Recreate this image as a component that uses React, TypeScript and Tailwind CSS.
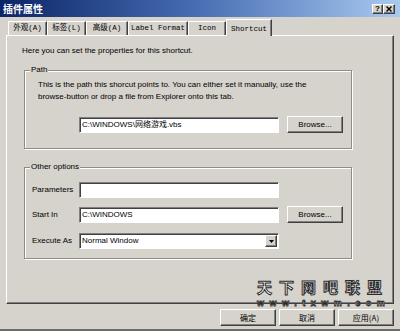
import React from "react";

const tabs = [
  { label: "外观(A)", w: "w-[39px]" },
  { label: "标签(L)", w: "w-[39px]" },
  { label: "高级(A)", w: "w-[42px]" },
  { label: "Label Format", w: "w-[60px]" },
  { label: "Icon", w: "w-[38px]" },
];

const raised =
  "border border-t-white border-l-white border-r-[#404040] border-b-[#404040] shadow-[inset_-1px_-1px_0_#808080] bg-[#d6d2cc]";
const sunken =
  "border border-t-[#808080] border-l-[#808080] border-r-white border-b-white shadow-[inset_1px_1px_0_#404040] bg-white";
const group =
  "relative w-[328px] border border-[#8f8c87] shadow-[inset_1px_1px_0_#fff,1px_1px_0_#fff]";

const Btn = ({ children, className = "" }: { children: React.ReactNode; className?: string }) => (
  <div className={`${raised} flex items-center justify-center text-[8px] text-black ${className}`}>
    {children}
  </div>
);

const Field = ({ value = "" }: { value?: string }) => (
  <div className={`${sunken} w-[200px] h-[16px] flex items-center pl-[2px] text-[8px] text-black`}>
    {value}
  </div>
);

export default function App() {
  return (
    <div className="relative w-[400px] h-[331px] overflow-hidden bg-[#d6d2cc] border-b-[2px] border-b-[#6e6c69] font-['Liberation_Sans','Noto_Sans_CJK_SC',sans-serif]">
      {/* title bar */}
      <div className="h-[17px] flex items-center justify-between pl-[3px] pr-[5px] bg-gradient-to-r from-[#0b2567] via-[#4a6fb4] to-[#a9caef]">
        <span className="text-white font-bold text-[10px] leading-none font-['Noto_Sans_CJK_SC',sans-serif]">插件属性</span>
        <div className="flex mt-[1px]">
          <div className={`${raised} w-[11px] h-[10px] flex items-center justify-center text-[8px] font-bold leading-none text-black`}>?</div>
          <div className={`${raised} w-[12px] h-[10px] flex items-center justify-center`}>
            <svg width="6" height="6" viewBox="0 0 6 6">
              <path d="M0.5 0.5L5.5 5.5M5.5 0.5L0.5 5.5" stroke="#000" strokeWidth="1.4" />
            </svg>
          </div>
        </div>
      </div>

      {/* tabs */}
      <div className="mt-[2px] h-[16px] flex items-end pl-[8px] font-['Liberation_Mono','Noto_Sans_CJK_SC',monospace] text-[7.5px] text-black">
        {tabs.map((t) => (
          <div
            key={t.label}
            className={`${t.w} h-[14px] flex items-center justify-center border-t border-l border-t-white border-l-white border-r border-r-[#404040] shadow-[inset_-1px_0_0_#808080] whitespace-nowrap`}
          >
            {t.label}
          </div>
        ))}
        <div className="relative z-10 w-[46px] h-[17px] -mb-px flex items-start justify-center pt-[4px] bg-[#d6d2cc] border-t border-l border-t-white border-l-white border-r border-r-[#404040] shadow-[inset_-1px_0_0_#808080]">
          Shortcut
        </div>
      </div>

      {/* panel */}
      <div className="ml-[6px] w-[388px] h-[269px] border border-t-white border-l-white border-r-[#404040] border-b-[#404040] shadow-[inset_-1px_-1px_0_#808080] pl-[15px] pt-[10px] text-black text-[8px]">
        <p className="leading-[10px]">Here you can set the properties for this shortcut.</p>

        <div className={`${group} ml-[2px] mt-[14px] h-[79px] pt-[8px] pl-[13px]`}>
          <span className="absolute -top-[6px] left-[5px] px-[1px] bg-[#d6d2cc] leading-[10px]">Path</span>
          <p className="leading-[12px] w-[272px]">
            This is the path this shorcut points to. You can either set it manually, use the browse-button or drop a file from Explorer onto this tab.
          </p>
          <div className="flex items-center mt-[13px] ml-[41px]">
            <Field value="C:\WINDOWS\网络游戏.vbs" />
            <Btn className="ml-[8px] w-[56px] h-[17px]">Browse...</Btn>
          </div>
        </div>

        <div className={`${group} ml-[2px] mt-[18px] h-[92px] pt-[14px] pl-[7px]`}>
          <span className="absolute -top-[6px] left-[5px] px-[1px] bg-[#d6d2cc] leading-[10px]">Other options</span>
          <div className="flex items-center">
            <span className="w-[47px]">Parameters</span>
            <Field />
          </div>
          <div className="flex items-center mt-[8px]">
            <span className="w-[47px]">Start In</span>
            <Field value="C:\WINDOWS" />
            <Btn className="ml-[8px] w-[56px] h-[17px]">Browse...</Btn>
          </div>
          <div className="flex items-center mt-[10px]">
            <span className="w-[47px]">Execute As</span>
            <div className={`${sunken} w-[200px] h-[16px] flex items-center pl-[2px] pr-[1px]`}>
              <span className="flex-1">Normal Window</span>
              <div className={`${raised} w-[12px] h-[12px] flex items-center justify-center`}>
                <svg width="5" height="3" viewBox="0 0 5 3">
                  <path d="M0 0H5L2.5 3Z" fill="#000" />
                </svg>
              </div>
            </div>
          </div>
        </div>
      </div>

      {/* bottom buttons */}
      <div className="mt-[5px] flex justify-end gap-[3px] pr-[6px] font-['Noto_Sans_CJK_SC',sans-serif]">
        <Btn className="w-[56px] h-[17px]">确定</Btn>
        <Btn className="w-[56px] h-[17px]">取消</Btn>
        <Btn className="w-[56px] h-[17px]">应用(A)</Btn>
      </div>

      {/* watermark */}
      <div className="absolute left-[257px] top-[277px] flex flex-col items-start pointer-events-none">
        <span className="h-[19px] text-[15px] leading-[19px] font-bold tracking-[7px] text-white [-webkit-text-stroke:1px_#2a2a2a] font-['Noto_Sans_CJK_SC',serif]">
          天下网吧联盟
        </span>
        <span className="mt-[2px] h-[10px] text-[9px] leading-[10px] font-bold tracking-[5.5px] text-white [-webkit-text-stroke:0.8px_#2a2a2a] font-['Liberation_Sans',sans-serif]">
          www.txwm.com
        </span>
      </div>
    </div>
  );
}
